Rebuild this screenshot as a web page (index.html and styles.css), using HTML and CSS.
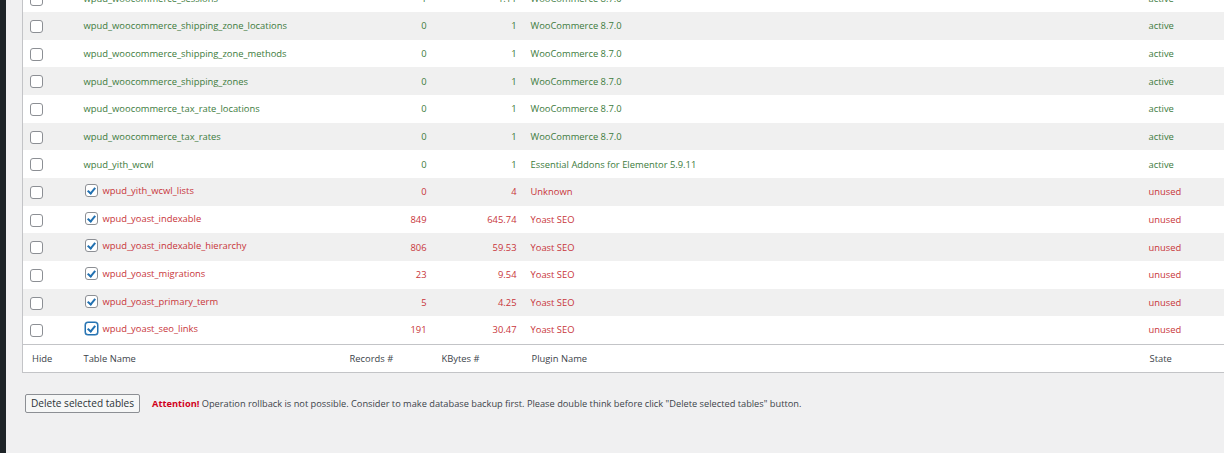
FILE: index.html
```html
<!DOCTYPE html>
<html>
<head>
<meta charset="utf-8">
<link rel="stylesheet" href="styles.css">
</head>
<body>
<div class="sidebar"></div>
<div class="main">
  <table class="tables">
    <colgroup>
      <col class="c-hide"><col class="c-name"><col class="c-rec"><col class="c-kb"><col class="c-plugin"><col class="c-state">
    </colgroup>
    <tbody>
      <tr class="row ok"><td class="hide"><span class="cb"></span></td><td>wpud_woocommerce_sessions</td><td class="num">1</td><td class="num">1.11</td><td>WooCommerce 8.7.0</td><td>active</td></tr>
      <tr class="row ok"><td class="hide"><span class="cb"></span></td><td>wpud_woocommerce_shipping_zone_locations</td><td class="num">0</td><td class="num">1</td><td>WooCommerce 8.7.0</td><td>active</td></tr>
      <tr class="row ok"><td class="hide"><span class="cb"></span></td><td>wpud_woocommerce_shipping_zone_methods</td><td class="num">0</td><td class="num">1</td><td>WooCommerce 8.7.0</td><td>active</td></tr>
      <tr class="row ok"><td class="hide"><span class="cb"></span></td><td>wpud_woocommerce_shipping_zones</td><td class="num">0</td><td class="num">1</td><td>WooCommerce 8.7.0</td><td>active</td></tr>
      <tr class="row ok"><td class="hide"><span class="cb"></span></td><td>wpud_woocommerce_tax_rate_locations</td><td class="num">0</td><td class="num">1</td><td>WooCommerce 8.7.0</td><td>active</td></tr>
      <tr class="row ok"><td class="hide"><span class="cb"></span></td><td>wpud_woocommerce_tax_rates</td><td class="num">0</td><td class="num">1</td><td>WooCommerce 8.7.0</td><td>active</td></tr>
      <tr class="row ok"><td class="hide"><span class="cb"></span></td><td>wpud_yith_wcwl</td><td class="num">0</td><td class="num">1</td><td>Essential Addons for Elementor 5.9.11</td><td>active</td></tr>
      <tr class="row bad"><td class="hide"><span class="cb"></span></td><td><span class="name"><span class="cb on"></span>wpud_yith_wcwl_lists</span></td><td class="num">0</td><td class="num">4</td><td>Unknown</td><td>unused</td></tr>
      <tr class="row bad"><td class="hide"><span class="cb"></span></td><td><span class="name"><span class="cb on"></span>wpud_yoast_indexable</span></td><td class="num">849</td><td class="num">645.74</td><td>Yoast SEO</td><td>unused</td></tr>
      <tr class="row bad"><td class="hide"><span class="cb"></span></td><td><span class="name"><span class="cb on"></span>wpud_yoast_indexable_hierarchy</span></td><td class="num">806</td><td class="num">59.53</td><td>Yoast SEO</td><td>unused</td></tr>
      <tr class="row bad"><td class="hide"><span class="cb"></span></td><td><span class="name"><span class="cb on"></span>wpud_yoast_migrations</span></td><td class="num">23</td><td class="num">9.54</td><td>Yoast SEO</td><td>unused</td></tr>
      <tr class="row bad"><td class="hide"><span class="cb"></span></td><td><span class="name"><span class="cb on"></span>wpud_yoast_primary_term</span></td><td class="num">5</td><td class="num">4.25</td><td>Yoast SEO</td><td>unused</td></tr>
      <tr class="row bad"><td class="hide"><span class="cb"></span></td><td><span class="name"><span class="cb on focus"></span>wpud_yoast_seo_links</span></td><td class="num">191</td><td class="num">30.47</td><td>Yoast SEO</td><td>unused</td></tr>
    </tbody>
    <tfoot>
      <tr class="foot"><td>Hide</td><td>Table Name</td><td>Records #</td><td>KBytes #</td><td>Plugin Name</td><td>State</td></tr>
    </tfoot>
  </table>
  <div class="actions">
    <button class="btn" type="button">Delete selected tables</button>
    <p class="warn"><strong>Attention!</strong> Operation rollback is not possible. Consider to make database backup first. Please double think before click "Delete selected tables" button.</p>
  </div>
</div>
</body>
</html>
```

FILE: styles.css
```css
html, body {
  margin: 0;
  padding: 0;
  height: 100%;
}
body {
  display: flex;
  background: #f0f0f1;
  font-family: "Open Sans", "Noto Sans", Arial, sans-serif;
  font-size: 9.4px;
  color: #3c434a;
  overflow: hidden;
}
.sidebar {
  width: 6px;
  flex: none;
  background: #1d2327;
}
.main {
  flex: 1;
  padding-left: 16px;
  min-width: 0;
}
.tables {
  margin-top: -16px;
  width: 1400px;
  border-collapse: collapse;
  table-layout: fixed;
  background: #fff;
  border: 1px solid #c3c4c7;
}
.c-hide { width: 53px; }
.c-name { width: 265px; }
.c-rec { width: 92px; }
.c-kb { width: 90px; }
.c-plugin { width: 618px; }
.c-state { width: 282px; }

.tables td {
  height: 27.67px;
  padding: 0 8px;
  vertical-align: middle;
  white-space: nowrap;
  box-sizing: border-box;
}
.tables td.num {
  text-align: right;
  padding-right: 6px;
}
.row.ok td { color: #3d7b3d; }
.row.bad td { color: #c8353a; }
.row:nth-child(odd) { background: #fff; }
.row:nth-child(even) { background: #f0f0f0; }

.cb {
  display: inline-block;
  width: 13px;
  height: 13px;
  box-sizing: border-box;
  border: 1px solid #8c8f94;
  border-radius: 3px;
  background: #fff;
  vertical-align: middle;
  position: relative;
}
.hide .cb { margin-left: -1px; }
.name {
  display: inline-flex;
  align-items: center;
  gap: 5px;
  margin-left: 1px;
}
.cb.on::after {
  content: "";
  position: absolute;
  left: 3.5px;
  top: 1px;
  width: 3px;
  height: 6px;
  border: solid #2271b1;
  border-width: 0 2px 2px 0;
  transform: rotate(40deg);
}
.cb.focus {
  border: 1.5px solid #2271b1;
  box-shadow: 0 0 0 0.5px #2271b1;
}

.foot td {
  border-top: 1px solid #c3c4c7;
  height: 28px;
  color: #3c434a;
}
.foot td:first-child { padding-left: 9px; }
.foot td:nth-child(3), .foot td:nth-child(4), .foot td:nth-child(5), .foot td:nth-child(6) { padding-left: 9px; }

.actions {
  display: flex;
  align-items: center;
  gap: 12px;
  margin-top: 21px;
  padding-left: 3px;
}
.btn {
  font-family: "Open Sans", "Noto Sans", Arial, sans-serif;
  font-size: 10.1px;
  color: #2c3338;
  background: #f6f7f7;
  border: 1px solid #8c8f94;
  border-radius: 2px;
  height: 19px;
  padding: 0 5px;
  line-height: 17px;
}
.warn {
  margin: 0;
  font-size: 9.25px;
  color: #3c434a;
}
.warn strong {
  color: #d0021b;
  font-weight: 700;
}
```
